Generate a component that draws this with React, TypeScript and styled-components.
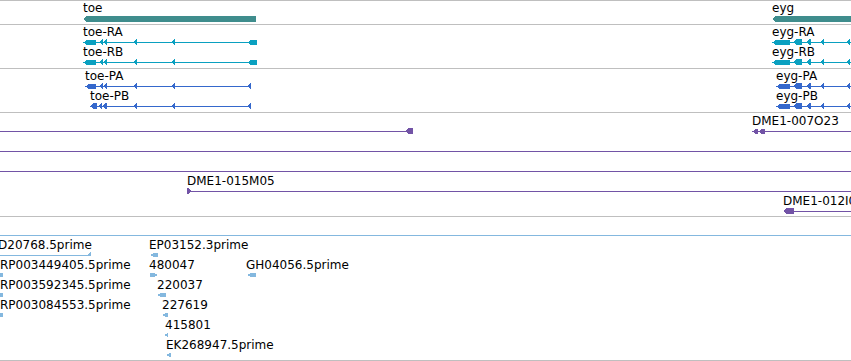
import React from "react";
import styled, { createGlobalStyle } from "styled-components";

const GlobalStyle = createGlobalStyle`
  html, body {
    margin: 0;
    padding: 0;
    background: #fff;
  }
  body {
    font-family: "DejaVu Sans", "Liberation Sans", sans-serif;
    font-size: 12px;
    color: #000;
  }
`;

const C = {
  rule: "#bfbfbf",
  gene: "#3f8d8d",
  mrna: "#0aa0c0",
  cds: "#3568cc",
  clone: "#7253a6",
  est: "#84b8df",
};

const Panel = styled.div`
  width: 851px;
  height: 361px;
  box-sizing: border-box;
  overflow: hidden;
  background: #fff;
  border-bottom: 1px solid ${C.rule};
`;

const Track = styled.section<{ $height: number; $pad?: number }>`
  height: ${(p) => p.$height}px;
  box-sizing: content-box;
  padding-top: ${(p) => p.$pad ?? 0}px;
  border-top: 1px solid ${C.rule};
  overflow: hidden;
`;

const Lane = styled.div<{ $h?: number }>`
  position: relative;
  height: ${(p) => p.$h ?? 20}px;

  svg {
    display: block;
  }
`;

const Label = styled.span`
  position: absolute;
  top: 0;
  white-space: nowrap;
  line-height: 14px;
`;

const Y = 17;

const Intron = ({ from, to, y = Y }: { from: number; to: number; y?: number }) => (
  <rect x={from} y={y} width={to - from} height={1} />
);

type BlockProps = { from: number; to: number; h?: number; dir?: "l" | "r"; y?: number };

// a filled block with a pointed end, the strand arrow of a feature
const Block = ({ from, to, h = 5, dir = "l", y = Y }: BlockProps) => {
  const top = y - Math.floor(h / 2);
  const bot = top + h;
  const mid = top + h / 2;
  const t = Math.min(4, to - from);
  const pts =
    dir === "l"
      ? [[from, mid], [from + t, top], [to, top], [to, bot], [from + t, bot]]
      : [[from, top], [to - t, top], [to, mid], [to - t, bot], [from, bot]];
  return <polygon points={pts.map((p) => p.join(",")).join(" ")} />;
};

const Tick = ({ x }: { x: number }) => <Block from={x} to={x + 4} h={6} />;

type ModelProps = { from: number; to: number; exons: number[][]; arrows?: number[][]; ticks?: number[] };

const Model = ({ from, to, exons, arrows = [], ticks = [] }: ModelProps) => (
  <>
    <Intron from={from} to={to} />
    {exons.map(([a, b]) => (
      <Block key={`e${a}`} from={a} to={b} />
    ))}
    {arrows.map(([a, b]) => (
      <Block key={`a${a}`} from={a} to={b} h={6} />
    ))}
    {ticks.map((x) => (
      <Tick key={`t${x}`} x={x} />
    ))}
  </>
);

type LaneSpec = {
  h?: number;
  color: string;
  labels?: { x: number; text: string }[];
  draw: React.ReactNode;
};

const LaneRow = ({ spec }: { spec: LaneSpec }) => {
  const h = spec.h ?? 20;
  return (
    <Lane $h={h}>
      <svg width={851} height={h} shapeRendering="crispEdges">
        <g fill={spec.color}>{spec.draw}</g>
      </svg>
      {(spec.labels ?? []).map((l) => (
        <Label key={l.text} style={{ left: l.x }}>
          {l.text}
        </Label>
      ))}
    </Lane>
  );
};

const toeTx = { from: 83, to: 257, exons: [[83, 96], [247, 257]], arrows: [[99, 103], [103, 107]], ticks: [133, 171] };
const eygTx = { from: 772, to: 851, exons: [[772, 790]], arrows: [[793, 802], [806, 811]], ticks: [820, 846] };
const eygCds = { from: 776, to: 851, exons: [[776, 790]], arrows: [[793, 802], [806, 811]], ticks: [820, 846] };

const genes: LaneSpec[] = [
  {
    h: 23,
    color: C.gene,
    labels: [
      { x: 83, text: "toe" },
      { x: 772, text: "eyg" },
    ],
    draw: (
      <>
        <Block from={83} to={256} h={6} y={18} />
        <Block from={772} to={860} h={6} y={18} />
      </>
    ),
  },
];

const transcripts: LaneSpec[] = ["RA", "RB"].map((n) => ({
  color: C.mrna,
  labels: [
    { x: 83, text: `toe-${n}` },
    { x: 772, text: `eyg-${n}` },
  ],
  draw: (
    <>
      <Model {...toeTx} />
      <Model {...eygTx} />
    </>
  ),
}));

const proteins: LaneSpec[] = [
  {
    color: C.cds,
    labels: [
      { x: 85, text: "toe-PA" },
      { x: 776, text: "eyg-PA" },
    ],
    draw: (
      <>
        <Model from={85} to={251} exons={[[85, 96]]} arrows={[[99, 103], [103, 107]]} ticks={[133, 171, 247]} />
        <Model {...eygCds} />
      </>
    ),
  },
  {
    color: C.cds,
    labels: [
      { x: 90, text: "toe-PB" },
      { x: 776, text: "eyg-PB" },
    ],
    draw: (
      <>
        <Model from={90} to={251} exons={[]} arrows={[[90, 97], [98, 102], [102, 107]]} ticks={[133, 171, 247]} />
        <Model {...eygCds} />
      </>
    ),
  },
];

const clones: LaneSpec[] = [
  {
    color: C.clone,
    labels: [{ x: 752, text: "DME1-007O23" }],
    draw: (
      <>
        <Intron from={0} to={406} />
        <Block from={405} to={413} h={6} />
        <Block from={752} to={758} />
        <Block from={758} to={765} />
        <Intron from={765} to={851} />
      </>
    ),
  },
  { color: C.clone, draw: <Intron from={0} to={851} /> },
  { color: C.clone, draw: <Intron from={0} to={851} /> },
  {
    color: C.clone,
    labels: [{ x: 187, text: "DME1-015M05" }],
    draw: (
      <>
        <Block from={187} to={192} h={6} dir="r" />
        <Intron from={187} to={851} />
      </>
    ),
  },
  {
    color: C.clone,
    labels: [{ x: 783, text: "DME1-012I06" }],
    draw: (
      <>
        <Block from={783} to={794} h={6} />
        <Intron from={794} to={851} />
      </>
    ),
  },
];

const Est = ({ from, to, dir = "l" }: { from: number; to: number; dir?: "l" | "r" }) => (
  <Block from={from} to={to} h={4} dir={dir} />
);

const ests: LaneSpec[] = [
  { color: C.est, draw: <Intron from={0} to={851} /> },
  {
    color: C.est,
    labels: [
      { x: -2, text: "D20768.5prime" },
      { x: 149, text: "EP03152.3prime" },
    ],
    draw: (
      <>
        <Intron from={0} to={88} />
        <polygon points="86,18 91,14 91,18" />
        <Est from={150} to={158} />
      </>
    ),
  },
  {
    color: C.est,
    labels: [
      { x: 0, text: "RP003449405.5prime" },
      { x: 149, text: "480047" },
      { x: 246, text: "GH04056.5prime" },
    ],
    draw: (
      <>
        <Est from={-4} to={3} />
        <Est from={150} to={158} dir="r" />
        <Est from={247} to={256} />
      </>
    ),
  },
  {
    color: C.est,
    labels: [
      { x: 0, text: "RP003592345.5prime" },
      { x: 157, text: "220037" },
    ],
    draw: (
      <>
        <Est from={-4} to={3} />
        <Est from={157} to={166} />
      </>
    ),
  },
  {
    color: C.est,
    labels: [
      { x: 0, text: "RP003084553.5prime" },
      { x: 162, text: "227619" },
    ],
    draw: (
      <>
        <Est from={-4} to={3} />
        <Est from={162} to={168} />
      </>
    ),
  },
  {
    color: C.est,
    labels: [{ x: 165, text: "415801" }],
    draw: <Est from={164} to={168} />,
  },
  {
    color: C.est,
    labels: [{ x: 166, text: "EK268947.5prime" }],
    draw: <Est from={166} to={171} />,
  },
];

const tracks: { height: number; pad?: number; lanes: LaneSpec[] }[] = [
  { height: 23, lanes: genes },
  { height: 43, lanes: transcripts },
  { height: 43, lanes: proteins },
  { height: 102, pad: 1, lanes: clones },
  { height: 142, pad: 1, lanes: ests },
];

export default function App() {
  return (
    <>
      <GlobalStyle />
      <Panel>
        {tracks.map((t, i) => (
          <Track key={i} $height={t.height} $pad={t.pad}>
            {t.lanes.map((l, j) => (
              <LaneRow key={j} spec={l} />
            ))}
          </Track>
        ))}
      </Panel>
    </>
  );
}
